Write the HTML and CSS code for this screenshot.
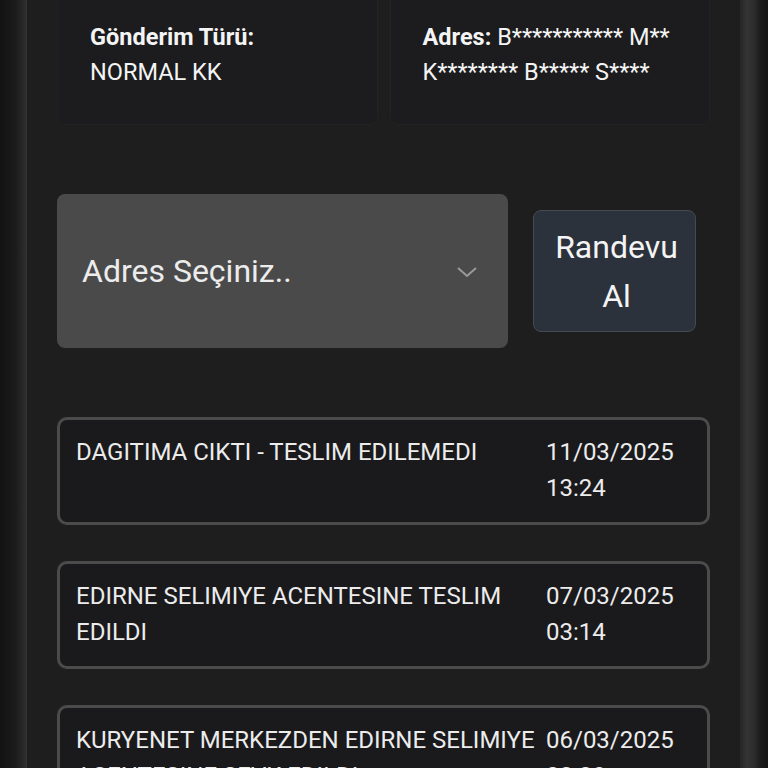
FILE: index.html
```html
<!DOCTYPE html>
<html lang="tr">
<head>
    <meta charset="UTF-8">
    <meta name="viewport" content="width=device-width, initial-scale=1.0">
    <title>Gönderi Takip</title>
    <link rel="stylesheet" href="styles.css">
</head>
<body>
    <div class="screen">
        <div class="edge edge-left"></div>

        <main class="panel">
            <div class="info-row">
                <div class="info-card">
                    <p><strong>Gönderim Türü:</strong></p>
                    <p>NORMAL KK</p>
                </div>
                <div class="info-card">
                    <p><strong>Adres:</strong> B*********** M** K******** B***** S****</p>
                </div>
            </div>

            <div class="appointment">
                <div class="address-select">
                    <span>Adres Seçiniz..</span>
                    <svg class="chevron" width="22" height="12" viewBox="0 0 22 12">
                        <path d="M2 2 L11 10 L20 2" fill="none" stroke="#9a9a9a" stroke-width="2"/>
                    </svg>
                </div>
                <button class="btn-appointment">Randevu<br>Al</button>
            </div>

            <div class="history">
                <div class="history-item">
                    <div class="history-text">DAGITIMA CIKTI - TESLIM EDILEMEDI</div>
                    <div class="history-date">11/03/2025<br>13:24</div>
                </div>
                <div class="history-item">
                    <div class="history-text">EDIRNE SELIMIYE ACENTESINE TESLIM EDILDI</div>
                    <div class="history-date">07/03/2025<br>03:14</div>
                </div>
                <div class="history-item">
                    <div class="history-text">KURYENET MERKEZDEN EDIRNE SELIMIYE ACENTESINE SEVK EDILDI</div>
                    <div class="history-date">06/03/2025<br>22:20</div>
                </div>
            </div>
        </main>

        <div class="edge edge-right"></div>
    </div>
</body>
</html>
```

FILE: styles.css
```css
* {
    margin: 0;
    padding: 0;
    box-sizing: border-box;
}

body {
    font-family: Roboto, 'Noto Sans', sans-serif;
    background-color: #161616;
    color: #f2f2f2;
    height: 768px;
    overflow: hidden;
}

.screen {
    display: flex;
    height: 768px;
}

.edge {
    flex: 0 0 auto;
}

.edge-left {
    width: 27px;
    background: linear-gradient(to right, #121212, #1c1c1c 60%, #2b2b2b 90%, #333 100%);
}

.edge-right {
    width: 28px;
    background: linear-gradient(to right, #262626, #343434 25%, #2c2c2c 50%, #1a1a1a 75%, #141414);
}

.panel {
    flex: 1;
    background: #1e1e1f;
    padding: 0 30px 0 30px;
}

/* top info cards */
.info-row {
    display: flex;
    gap: 12px;
}

.info-card {
    flex: 1;
    height: 125px;
    background: #1c1c1e;
    border: 1px solid #222224;
    border-top: none;
    border-radius: 0 0 8px 8px;
    padding: 20px 20px 0 32px;
    font-size: 23.5px;
    line-height: 35px;
    color: #f4f4f4;
}

.info-card strong {
    font-weight: 700;
}

/* adres + randevu */
.appointment {
    display: flex;
    align-items: center;
    gap: 25px;
    margin-top: 69px;
    padding-right: 14px;
}

.address-select {
    flex: 0 0 451px;
    height: 154px;
    background: #4a4a4b;
    border-radius: 8px;
    display: flex;
    align-items: center;
    justify-content: space-between;
    padding: 0 30px 0 25px;
    font-size: 32px;
    color: #ececec;
}

.chevron {
    margin-top: 2px;
}

.btn-appointment {
    flex: 1;
    height: 122px;
    background: #2c323b;
    border: 1px solid #434a54;
    border-radius: 8px;
    color: #f4f4f4;
    font-family: Roboto, sans-serif;
    font-size: 32px;
    line-height: 49px;
    padding: 1px 0 0 4px;
}

/* hareketler */
.history {
    display: flex;
    flex-direction: column;
    gap: 36px;
    margin-top: 69px;
}

.history-item {
    display: flex;
    gap: 5px;
    border: 3px solid #4b4b4c;
    border-radius: 10px;
    background: #1a1a1c;
    min-height: 108px;
    padding: 14px 10px 16px 16px;
    font-size: 24px;
    line-height: 36px;
    color: #ececec;
}

.history-text {
    flex: 0 0 465px;
}

.history-date {
    flex: 0 0 auto;
}
```
